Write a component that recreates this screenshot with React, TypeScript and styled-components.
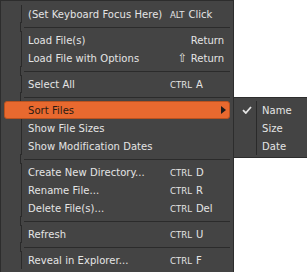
import { FC } from 'react';
import styled, { createGlobalStyle } from 'styled-components';

const GlobalStyle = createGlobalStyle`
  html, body {
    margin: 0;
    padding: 0;
    background: #ffffff;
    overflow: hidden;
  }
  body {
    font-family: 'DejaVu Sans', Verdana, sans-serif;
    font-size: 10px;
    color: #e4e4e4;
  }
`;

const Page = styled.div`
  display: flex;
  align-items: flex-start;
  width: 307px;
  height: 272px;
  overflow: hidden;
`;

const Menu = styled.div`
  display: flex;
  flex-direction: column;
  flex-shrink: 0;
  width: 234px;
  box-sizing: border-box;
  padding: 4px 0 3px;
  background: #444444;
  border: 1px solid #2d2d2d;
`;

const SubMenu = styled(Menu)`
  width: 90px;
  margin-top: 97px;
  padding: 3px 0 2px;
  border-left: none;
`;

const Row = styled.div<{ $active?: boolean }>`
  display: flex;
  align-items: center;
  height: 18px;
  margin: 0 3px;
  box-sizing: border-box;
  border-radius: 3px;
  border: 1px solid ${(p) => (p.$active ? '#b9521f' : 'transparent')};
  background: ${(p) => (p.$active ? '#e8692f' : 'transparent')};
  color: ${(p) => (p.$active ? '#2a1a12' : '#e4e4e4')};
`;

const Gutter = styled.div<{ $hidden?: boolean; $width?: number }>`
  display: flex;
  align-items: center;
  justify-content: center;
  align-self: stretch;
  flex-shrink: 0;
  width: ${(p) => p.$width ?? 17}px;
  margin: -1px 0 -1px -1px;
  border-right: 1px solid ${(p) => (p.$hidden ? 'transparent' : '#2a2a2a')};
`;

const Label = styled.span<{ $pad?: number }>`
  flex: 1;
  padding-left: ${(p) => p.$pad ?? 6}px;
  letter-spacing: 0.05px;
  white-space: nowrap;
`;

const Shortcut = styled.span<{ $right?: boolean; $indent?: number }>`
  display: flex;
  align-items: baseline;
  justify-content: ${(p) => (p.$right ? 'flex-end' : 'flex-start')};
  gap: 4px;
  width: 54px;
  padding-left: ${(p) => p.$indent ?? 0}px;
  padding-right: 5px;
  box-sizing: content-box;
  white-space: nowrap;
`;

const Key = styled.span<{ $symbol?: boolean }>`
  font-family: 'DejaVu Sans Condensed', 'DejaVu Sans', sans-serif;
  font-size: ${(p) => (p.$symbol ? 12 : 9.5)}px;
  line-height: 10px;
`;

const Arrow = styled.svg`
  width: 5px;
  height: 8px;
  margin-right: 3px;
`;

const SepRow = styled.div`
  display: flex;
  height: 8px;
  margin: 0 3px;
`;

const SepLine = styled.div`
  flex: 1;
  align-self: center;
  height: 1px;
  margin-left: 3px;
  background: #2b2b2b;
`;

const Check = styled.svg`
  width: 10px;
  height: 8px;
`;

type Entry =
  | { sep: true }
  | {
      sep?: false;
      label: string;
      mod?: string;
      key?: string;
      right?: boolean;
      indent?: number;
      sub?: boolean;
    };

const entries: Entry[] = [
  { label: '(Set Keyboard Focus Here)', mod: 'ALT', key: 'Click', indent: 7 },
  { sep: true },
  { label: 'Load File(s)', key: 'Return', right: true },
  { label: 'Load File with Options', mod: '⇧', key: 'Return', right: true },
  { sep: true },
  { label: 'Select All', mod: 'CTRL', key: 'A' },
  { sep: true },
  { label: 'Sort Files', sub: true },
  { label: 'Show File Sizes' },
  { label: 'Show Modification Dates' },
  { sep: true },
  { label: 'Create New Directory...', mod: 'CTRL', key: 'D' },
  { label: 'Rename File...', mod: 'CTRL', key: 'R' },
  { label: 'Delete File(s)...', mod: 'CTRL', key: 'Del' },
  { sep: true },
  { label: 'Refresh', mod: 'CTRL', key: 'U' },
  { sep: true },
  { label: 'Reveal in Explorer...', mod: 'CTRL', key: 'F' },
];

const sortOptions = [
  { label: 'Name', checked: true },
  { label: 'Size' },
  { label: 'Date' },
];

const App: FC = () => (
  <>
    <GlobalStyle />
    <Page>
      <Menu>
        {entries.map((e, i) =>
          e.sep ? (
            <SepRow key={i}>
              <Gutter />
              <SepLine />
            </SepRow>
          ) : (
            <Row key={i} $active={e.sub}>
              <Gutter $hidden={e.sub} />
              <Label>{e.label}</Label>
              {e.sub ? (
                <Arrow viewBox="0 0 5 8">
                  <path d="M0 0 L5 4 L0 8 Z" fill="#1c1c1c" />
                </Arrow>
              ) : (
                <Shortcut $right={e.right} $indent={e.indent}>
                  {e.mod && <Key $symbol={e.mod === '⇧'}>{e.mod}</Key>}
                  {e.key && <span>{e.key}</span>}
                </Shortcut>
              )}
            </Row>
          )
        )}
      </Menu>
      <SubMenu>
        {sortOptions.map((o) => (
          <Row key={o.label}>
            <Gutter $width={19}>
              {o.checked && (
                <Check viewBox="0 0 10 8">
                  <path d="M1 4.2 L3.8 7 L9 1" fill="none" stroke="#e4e4e4" strokeWidth="1.8" />
                </Check>
              )}
            </Gutter>
            <Label $pad={5}>{o.label}</Label>
          </Row>
        ))}
      </SubMenu>
    </Page>
  </>
);

export default App;
